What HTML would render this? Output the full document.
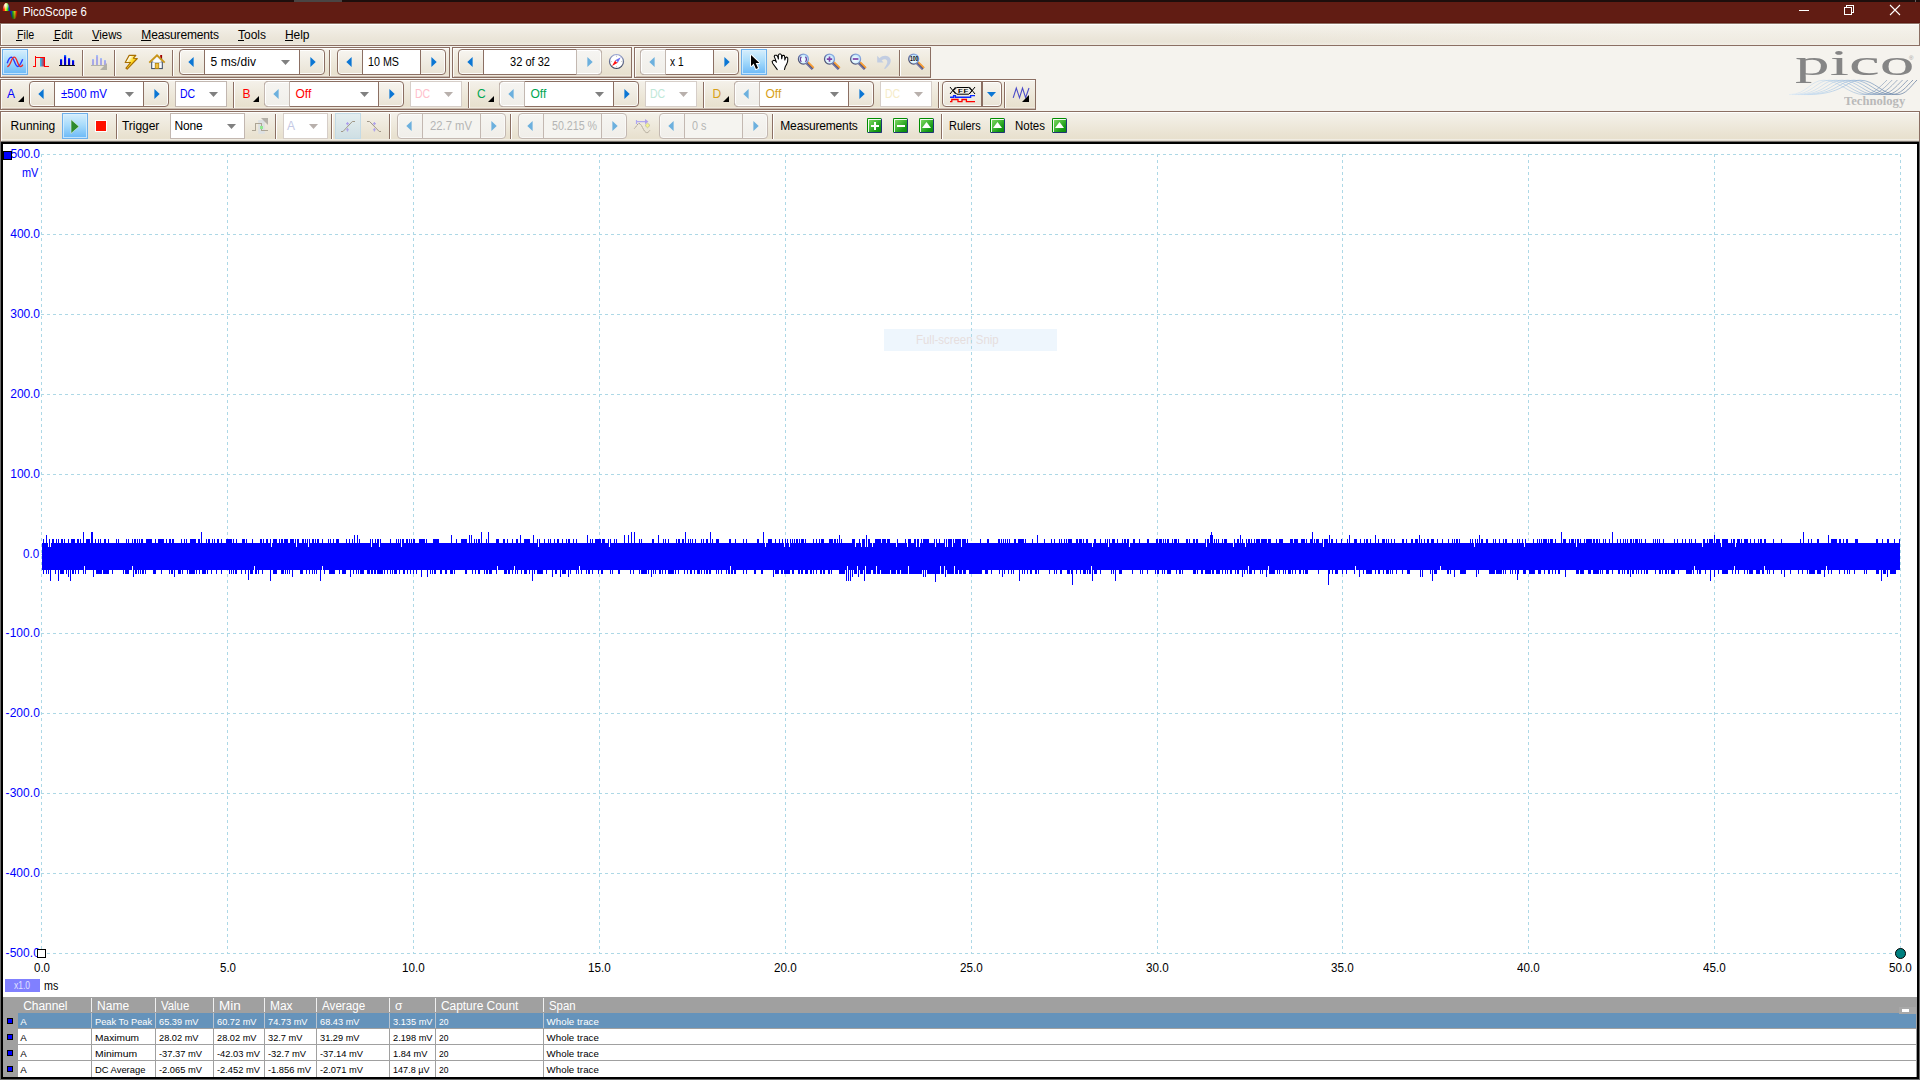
<!DOCTYPE html>
<html lang="en"><head><meta charset="utf-8"><title>PicoScope 6</title>
<style>
html,body{margin:0;padding:0}
body{width:1920px;height:1080px;position:relative;overflow:hidden;background:#f5f3ee;font-family:"Liberation Sans",sans-serif;font-size:12px}
div,span.t,svg{position:absolute;box-sizing:border-box}
span.t{display:block;line-height:16px;height:16px;white-space:pre}
svg{overflow:visible}
.strip{border:1px solid #8b6f63;background:linear-gradient(#fefefd 0,#fefefd 1px,#f4f1ea 1px,#eee9dc 45%,#e9e2d1 80%,#e8e0ce calc(100% - 2px),#efe8dc calc(100% - 2px),#efe8dc calc(100% - 1px),#c9bbae calc(100% - 1px));box-shadow:inset 1px 0 0 rgba(255,255,255,.8)}
.strip3{border-bottom:1px solid #77726c;background:linear-gradient(#fefefd 0,#fefefd 1px,#f4f1ea 1px,#eee9dc 45%,#e9e2d1 80%,#e8e0ce calc(100% - 2px),#f1ede3 calc(100% - 2px),#f1ede3 calc(100% - 1px),#ded7cc calc(100% - 1px))}
.grp{height:26px;border:1px solid #8b6f63;border-radius:4px;background:linear-gradient(#f7f5f0,#e9e3d5);box-shadow:inset 0 0 0 1px rgba(255,255,255,.85)}
.grp .in{top:0;bottom:0;background:#fff;border-left:1px solid #8b6f63;border-right:1px solid #8b6f63}
.grp.dis{border-color:#c3b8b1;background:linear-gradient(#f6f5f2,#f0eee9);box-shadow:inset 0 0 0 1px rgba(255,255,255,.55)}
.grp.dis .in{border-color:#c3b8b1;background:#f5f4f0}
.grp .dl{top:-1px;bottom:-1px;left:-1px;background:linear-gradient(#f6f5f2,#f0eee9);border:1px solid #c3b8b1;border-radius:4px 0 0 4px;box-shadow:inset 1px 0 0 #fff,inset 0 1px 0 #fff,inset 0 -1px 0 #fff}
.grp .dr{top:-1px;bottom:-1px;right:-1px;background:linear-gradient(#f6f5f2,#f0eee9);border:1px solid #c3b8b1;border-radius:0 4px 4px 0;box-shadow:inset -1px 0 0 #fff,inset 0 1px 0 #fff,inset 0 -1px 0 #fff}
.cb{background:#fff;border:1px solid #c2b7b0}
.cbd{border-color:#d6cec8}
.sep{width:2px;border-left:1px solid #8b6f63;background:#fff}
.sel{border:1px solid #6fb0ea;background:linear-gradient(#d6eefc,#a9dcfb 45%,#6cb9f7);box-shadow:inset 0 0 0 1px rgba(220,240,255,.75)}
.gb{width:15px;height:15px;border:1px solid;border-color:#008c00 #1f3674 #1f3674 #008c00;border-radius:1.5px;background:linear-gradient(135deg,#86dc68 0,#4cbc3c 40%,#169a16 75%,#0c8a0c 100%);box-shadow:inset 1px 1px 0 rgba(255,255,255,.92)}

</style></head>
<body>
<div style="left:0px;top:0px;width:1920px;height:2px;background:#1d0e0c"></div><div style="left:294px;top:0px;width:48px;height:2px;background:#4a4544"></div><div style="left:1915px;top:0px;width:1px;height:2px;background:#6a6262"></div><div style="left:0px;top:2px;width:1920px;height:21px;background:#611c13"></div><div style="left:0px;top:22px;width:1920px;height:1px;background:#5c150d"></div><svg style="left:0;top:0" width="22" height="22" viewBox="0 0 22 22">
<defs><linearGradient id="rb" x1="0" x2="1" y1="0" y2="0"><stop offset="0" stop-color="#d81010"/><stop offset=".2" stop-color="#ff2000"/><stop offset=".4" stop-color="#fff020"/><stop offset=".65" stop-color="#30e010"/><stop offset=".85" stop-color="#1020c0"/><stop offset="1" stop-color="#101890"/></linearGradient>
<linearGradient id="rb2" x1="0" x2="1" y1="0" y2="0"><stop offset="0" stop-color="#101890"/><stop offset=".15" stop-color="#1020c0"/><stop offset=".4" stop-color="#20c010"/><stop offset=".62" stop-color="#d8d010"/><stop offset=".85" stop-color="#e02000"/><stop offset="1" stop-color="#901008"/></linearGradient>
<radialGradient id="rbh" cx=".35" cy=".25" r=".6"><stop offset="0" stop-color="#fff" stop-opacity=".95"/><stop offset="1" stop-color="#fff" stop-opacity="0"/></radialGradient>
<linearGradient id="rbs" x1="0" x2="0" y1="0" y2="1"><stop offset="0" stop-color="#000" stop-opacity="0"/><stop offset="1" stop-color="#000" stop-opacity=".45"/></linearGradient></defs>
<path d="M2.7 11 C2.9 5.5 4.6 3 6.4 3 C8.2 3 9.6 6 10.2 11 Z" fill="url(#rb)"/>
<path d="M2.7 11 C2.9 5.5 4.6 3 6.4 3 C8.2 3 9.6 6 10.2 11 Z" fill="url(#rbh)"/>
<path d="M10 11 C10.6 16 12 19 13.9 19 C15.8 19 17.3 16 17.6 11 Z" fill="url(#rb2)"/>
<path d="M10 11 C10.6 16 12 19 13.9 19 C15.8 19 17.3 16 17.6 11 Z" fill="url(#rbs)"/>
</svg><span class="t" style="left:23.00px;top:4px;font-size:12px;color:#fff;transform-origin:0 50%;transform:scaleX(0.9453);">PicoScope 6</span><svg style="left:1790px;top:2px" width="120" height="20" viewBox="1790 2 120 20" shape-rendering="crispEdges" fill="none" stroke="#fff" stroke-width="1">
<path d="M1799 10.5 H1809"/>
<path d="M1844.5 7.5 H1851.5 V14.5 H1844.5 Z M1846.5 7 V5.5 H1853.5 V12.5 H1852"/>
<path d="M1890 5 L1900 15 M1900 5 L1890 15" shape-rendering="auto" stroke-width="1.1"/>
</svg><div style="left:0px;top:23px;width:1920px;height:23px;border:1px solid #8b6f63;border-top-color:#8f7468;background:linear-gradient(#fff 0,#fff 1px,#f4f1ea 1px,#ece7db 60%,#e9e3d6 85%,#eeeae0 100%);box-shadow:inset 1px 0 0 #fff"></div><div style="left:1200px;top:24px;width:719px;height:21px;background:linear-gradient(90deg,rgba(247,245,240,0),rgba(247,245,240,.45) 60%)"></div><span class="t" style="left:16.70px;top:27px;font-size:12px;color:#000;transform-origin:0 50%;transform:scaleX(0.8900);">File</span><span class="t" style="left:53.80px;top:27px;font-size:12px;color:#000;transform-origin:0 50%;transform:scaleX(0.8996);">Edit</span><span class="t" style="left:92.00px;top:27px;font-size:12px;color:#000;transform-origin:0 50%;transform:scaleX(0.9436);">Views</span><span class="t" style="left:141.30px;top:27px;font-size:12px;color:#000;letter-spacing:-0.151px;">Measurements</span><span class="t" style="left:238.00px;top:27px;font-size:12px;color:#000;">Tools</span><span class="t" style="left:285.00px;top:27px;font-size:12px;color:#000;letter-spacing:-0.069px;">Help</span><div style="left:16px;top:40px;width:6px;height:1px;background:#000"></div><div style="left:53px;top:40px;width:6px;height:1px;background:#000"></div><div style="left:92px;top:40px;width:7px;height:1px;background:#000"></div><div style="left:141px;top:40px;width:10px;height:1px;background:#000"></div><div style="left:238px;top:40px;width:6px;height:1px;background:#000"></div><div style="left:285px;top:40px;width:8px;height:1px;background:#000"></div><span class="t" style="left:1795.00px;top:42px;font-size:35px;color:#858585;font-family:'Liberation Serif', serif;line-height:44px;height:44px;transform-origin:0 0;transform:scaleX(1.98);">pico</span><span class="t" style="left:1844.00px;top:93px;font-size:11.5px;color:#b9b9b9;font-family:'Liberation Serif', serif;font-weight:bold;transform-origin:0 50%;transform:scaleX(1.0970);">Technology</span><span class="t" style="left:1909.00px;top:50px;font-size:6px;color:#a0a0a0;">®</span><svg style="left:0;top:0" width="1920" height="112" viewBox="0 0 1920 112" fill="none"><defs><linearGradient id="wv" gradientUnits="userSpaceOnUse" x1="1789" x2="1916" y1="0" y2="0"><stop offset="0" stop-color="#d6e6f6"/><stop offset=".3" stop-color="#b4d0ea"/><stop offset=".55" stop-color="#8fb0d4"/><stop offset=".7" stop-color="#6f8db2"/><stop offset="1" stop-color="#5a7396"/></linearGradient></defs><path d="M1789.0 94.6 C1807.0 94.6 1810.0 80.2 1824.0 80.2 C1839.0 80.2 1849.0 94.6 1864.0 94.6 C1873.0 94.6 1880.0 87 1887.0 80" stroke="url(#wv)" stroke-width=".75" opacity="0.70"/><path d="M1792.0 94.6 C1813.0 94.6 1816.0 80.2 1830.0 80.2 C1845.0 80.2 1854.5 94.6 1869.5 94.6 C1878.5 94.6 1885.2 87 1892.2 80" stroke="url(#wv)" stroke-width=".75" opacity="0.74"/><path d="M1795.0 94.6 C1819.0 94.6 1822.0 80.2 1836.0 80.2 C1851.0 80.2 1860.0 94.6 1875.0 94.6 C1884.0 94.6 1890.4 87 1897.4 80" stroke="url(#wv)" stroke-width=".75" opacity="0.78"/><path d="M1798.0 94.6 C1825.0 94.6 1828.0 80.2 1842.0 80.2 C1857.0 80.2 1865.5 94.6 1880.5 94.6 C1889.5 94.6 1895.6 87 1902.6 80" stroke="url(#wv)" stroke-width=".75" opacity="0.82"/><path d="M1801.0 94.6 C1831.0 94.6 1834.0 80.2 1848.0 80.2 C1863.0 80.2 1871.0 94.6 1886.0 94.6 C1895.0 94.6 1900.8 87 1907.8 80" stroke="url(#wv)" stroke-width=".75" opacity="0.86"/><path d="M1804.0 94.6 C1837.0 94.6 1840.0 80.2 1854.0 80.2 C1869.0 80.2 1876.5 94.6 1891.5 94.6 C1900.5 94.6 1906.0 87 1913.0 80" stroke="url(#wv)" stroke-width=".75" opacity="0.90"/><path d="M1807.0 94.6 C1843.0 94.6 1846.0 80.2 1860.0 80.2 C1875.0 80.2 1882.0 94.6 1897.0 94.6 C1906.0 94.6 1910.0 87 1917.0 80" stroke="url(#wv)" stroke-width=".75" opacity="0.94"/></svg><div class="strip" style="left:0px;top:47px;width:450px;height:31px;"></div><div class="strip" style="left:452px;top:47px;width:180px;height:31px;"></div><div class="strip" style="left:634px;top:47px;width:297px;height:31px;"></div><div class="sel" style="left:2px;top:49px;width:26px;height:26px;"></div><div class="sep" style="left:82px;top:50px;width:2px;height:26px;"></div><div class="sep" style="left:114px;top:50px;width:2px;height:26px;"></div><div class="sep" style="left:172px;top:50px;width:2px;height:26px;"></div><div class="grp" style="left:179px;top:49px;width:146px;height:26px;"><div class="in" style="left:24px;width:96px"></div></div><svg style="left:187.4px;top:55.5px" width="8" height="12" viewBox="0 0 8 12" ><path d="M1.3 6 L6.6 1 L6.6 11 Z" fill="#0b76d4"/></svg><svg style="left:308.6px;top:55.5px" width="8" height="12" viewBox="0 0 8 12" ><path d="M6.7 6 L1.4 1 L1.4 11 Z" fill="#0b76d4"/></svg><span class="t" style="left:210.40px;top:54px;font-size:12px;color:#000;letter-spacing:0.132px;">5 ms/div</span><svg style="left:281px;top:60px" width="9" height="5" viewBox="0 0 9 5" ><path d="M0 0 H9 L4.5 5 Z" fill="#808080"/></svg><div class="sep" style="left:329px;top:50px;width:2px;height:26px;"></div><div class="grp" style="left:337px;top:49px;width:109px;height:26px;"><div class="in" style="left:24px;width:59px"></div></div><svg style="left:345.4px;top:55.5px" width="8" height="12" viewBox="0 0 8 12" ><path d="M1.3 6 L6.6 1 L6.6 11 Z" fill="#0b76d4"/></svg><svg style="left:429.6px;top:55.5px" width="8" height="12" viewBox="0 0 8 12" ><path d="M6.7 6 L1.4 1 L1.4 11 Z" fill="#0b76d4"/></svg><span class="t" style="left:368.00px;top:54px;font-size:12px;color:#000;transform-origin:0 50%;transform:scaleX(0.8939);">10 MS</span><div class="grp" style="left:458px;top:49px;width:144px;height:26px;"><div class="in" style="left:24px;width:94px"></div><div class="dr" style="width:26px"></div></div><svg style="left:466.4px;top:55.5px" width="8" height="12" viewBox="0 0 8 12" ><path d="M1.3 6 L6.6 1 L6.6 11 Z" fill="#0b76d4"/></svg><svg style="left:585.6px;top:55.5px" width="8" height="12" viewBox="0 0 8 12" ><path d="M6.7 6 L1.4 1 L1.4 11 Z" fill="#6cb0de"/></svg><span class="t" style="left:510.30px;top:54px;font-size:12px;color:#000;transform-origin:0 50%;transform:scaleX(0.9223);">32 of 32</span><div class="grp" style="left:640px;top:49px;width:99px;height:26px;"><div class="in" style="left:24px;width:49px"></div><div class="dl" style="width:26px"></div></div><svg style="left:648.4px;top:55.5px" width="8" height="12" viewBox="0 0 8 12" ><path d="M1.3 6 L6.6 1 L6.6 11 Z" fill="#6cb0de"/></svg><svg style="left:722.6px;top:55.5px" width="8" height="12" viewBox="0 0 8 12" ><path d="M6.7 6 L1.4 1 L1.4 11 Z" fill="#0b76d4"/></svg><span class="t" style="left:670.00px;top:54px;font-size:12px;color:#000;transform-origin:0 50%;transform:scaleX(0.8449);">x 1</span><div class="sel" style="left:741px;top:49px;width:26px;height:26px;"></div><div class="sep" style="left:899px;top:50px;width:2px;height:26px;"></div><div class="strip" style="left:0px;top:79px;width:1036px;height:31px;"></div><span class="t" style="left:7.00px;top:86px;font-size:12px;color:#0000ff;">A</span><svg style="left:18px;top:96px" width="6" height="6" viewBox="0 0 6 6" ><path d="M6 0 V6 H0 Z" fill="#000"/></svg><div class="grp" style="left:29px;top:81px;width:140px;height:26px;"><div class="in" style="left:24px;width:90px"></div></div><svg style="left:37.4px;top:87.5px" width="8" height="12" viewBox="0 0 8 12" ><path d="M1.3 6 L6.6 1 L6.6 11 Z" fill="#0b76d4"/></svg><svg style="left:152.6px;top:87.5px" width="8" height="12" viewBox="0 0 8 12" ><path d="M6.7 6 L1.4 1 L1.4 11 Z" fill="#0b76d4"/></svg><span class="t" style="left:60.60px;top:86px;font-size:12px;color:#0000ff;transform-origin:0 50%;transform:scaleX(0.9596);">±500 mV</span><svg style="left:125px;top:92px" width="9" height="5" viewBox="0 0 9 5" ><path d="M0 0 H9 L4.5 5 Z" fill="#808080"/></svg><div class="cb" style="left:175px;top:81px;width:52px;height:26px;"></div><span class="t" style="left:179.80px;top:86px;font-size:12px;color:#0000ff;transform-origin:0 50%;transform:scaleX(0.8774);">DC</span><svg style="left:209px;top:92px" width="9" height="5" viewBox="0 0 9 5" ><path d="M0 0 H9 L4.5 5 Z" fill="#808080"/></svg><div class="sep" style="left:233px;top:82px;width:2px;height:26px;"></div><span class="t" style="left:242.50px;top:86px;font-size:12px;color:#ff0000;">B</span><svg style="left:253px;top:96px" width="6" height="6" viewBox="0 0 6 6" ><path d="M6 0 V6 H0 Z" fill="#000"/></svg><div class="grp" style="left:264px;top:81px;width:140px;height:26px;"><div class="in" style="left:24px;width:90px"></div><div class="dl" style="width:26px"></div></div><svg style="left:272.4px;top:87.5px" width="8" height="12" viewBox="0 0 8 12" ><path d="M1.3 6 L6.6 1 L6.6 11 Z" fill="#6cb0de"/></svg><svg style="left:387.6px;top:87.5px" width="8" height="12" viewBox="0 0 8 12" ><path d="M6.7 6 L1.4 1 L1.4 11 Z" fill="#0b76d4"/></svg><span class="t" style="left:295.60px;top:86px;font-size:12px;color:#ff0000;letter-spacing:-0.076px;">Off</span><svg style="left:360px;top:92px" width="9" height="5" viewBox="0 0 9 5" ><path d="M0 0 H9 L4.5 5 Z" fill="#808080"/></svg><div class="cb cbd" style="left:410px;top:81px;width:52px;height:26px;"></div><span class="t" style="left:414.80px;top:86px;font-size:12px;color:#ffc0cb;transform-origin:0 50%;transform:scaleX(0.8774);">DC</span><svg style="left:444px;top:92px" width="9" height="5" viewBox="0 0 9 5" ><path d="M0 0 H9 L4.5 5 Z" fill="#b8b0ac"/></svg><div class="sep" style="left:468px;top:82px;width:2px;height:26px;"></div><span class="t" style="left:477.00px;top:86px;font-size:12px;color:#00a651;">C</span><svg style="left:488px;top:96px" width="6" height="6" viewBox="0 0 6 6" ><path d="M6 0 V6 H0 Z" fill="#000"/></svg><div class="grp" style="left:499px;top:81px;width:140px;height:26px;"><div class="in" style="left:24px;width:90px"></div><div class="dl" style="width:26px"></div></div><svg style="left:507.4px;top:87.5px" width="8" height="12" viewBox="0 0 8 12" ><path d="M1.3 6 L6.6 1 L6.6 11 Z" fill="#6cb0de"/></svg><svg style="left:622.6px;top:87.5px" width="8" height="12" viewBox="0 0 8 12" ><path d="M6.7 6 L1.4 1 L1.4 11 Z" fill="#0b76d4"/></svg><span class="t" style="left:530.60px;top:86px;font-size:12px;color:#00a651;letter-spacing:-0.076px;">Off</span><svg style="left:595px;top:92px" width="9" height="5" viewBox="0 0 9 5" ><path d="M0 0 H9 L4.5 5 Z" fill="#808080"/></svg><div class="cb cbd" style="left:645px;top:81px;width:52px;height:26px;"></div><span class="t" style="left:649.80px;top:86px;font-size:12px;color:#c0e8d8;transform-origin:0 50%;transform:scaleX(0.8774);">DC</span><svg style="left:679px;top:92px" width="9" height="5" viewBox="0 0 9 5" ><path d="M0 0 H9 L4.5 5 Z" fill="#b8b0ac"/></svg><div class="sep" style="left:703px;top:82px;width:2px;height:26px;"></div><span class="t" style="left:712.50px;top:86px;font-size:12px;color:#d8a018;">D</span><svg style="left:723px;top:96px" width="6" height="6" viewBox="0 0 6 6" ><path d="M6 0 V6 H0 Z" fill="#000"/></svg><div class="grp" style="left:734px;top:81px;width:140px;height:26px;"><div class="in" style="left:24px;width:90px"></div><div class="dl" style="width:26px"></div></div><svg style="left:742.4px;top:87.5px" width="8" height="12" viewBox="0 0 8 12" ><path d="M1.3 6 L6.6 1 L6.6 11 Z" fill="#6cb0de"/></svg><svg style="left:857.6px;top:87.5px" width="8" height="12" viewBox="0 0 8 12" ><path d="M6.7 6 L1.4 1 L1.4 11 Z" fill="#0b76d4"/></svg><span class="t" style="left:765.60px;top:86px;font-size:12px;color:#d8a018;letter-spacing:-0.076px;">Off</span><svg style="left:830px;top:92px" width="9" height="5" viewBox="0 0 9 5" ><path d="M0 0 H9 L4.5 5 Z" fill="#808080"/></svg><div class="cb cbd" style="left:880px;top:81px;width:52px;height:26px;"></div><span class="t" style="left:884.80px;top:86px;font-size:12px;color:#f6ecc8;transform-origin:0 50%;transform:scaleX(0.8774);">DC</span><svg style="left:914px;top:92px" width="9" height="5" viewBox="0 0 9 5" ><path d="M0 0 H9 L4.5 5 Z" fill="#b8b0ac"/></svg><div class="sep" style="left:938px;top:82px;width:2px;height:26px;"></div><div class="grp" style="left:942px;top:81px;width:60px;height:26px;"><div style="left:38px;top:0;bottom:0;width:2px;background:#8b6f63"></div></div><svg style="left:987px;top:92px" width="9" height="5" viewBox="0 0 9 5" ><path d="M0 0 H9 L4.5 5 Z" fill="#0b76d4"/></svg><div class="sep" style="left:1004px;top:82px;width:2px;height:26px;"></div><div class="strip strip3" style="left:0px;top:111px;width:1920px;height:31px;"></div><span class="t" style="left:10.60px;top:118px;font-size:12px;color:#000;">Running</span><div class="sel" style="left:62px;top:113px;width:26px;height:26px;"></div><svg style="left:70px;top:119px" width="10" height="15" viewBox="0 0 10 15" ><path d="M1 0.5 L9 7.5 L1 14.5 Z" fill="#2e8b2e" stroke="#e8f4e8" stroke-width=".6"/></svg><div style="left:95px;top:120px;width:12px;height:12px;background:#fff"></div><div style="left:96px;top:121px;width:10px;height:10px;background:#ff1000"></div><div class="sep" style="left:116px;top:114px;width:2px;height:25px;"></div><span class="t" style="left:122.00px;top:118px;font-size:12px;color:#000;letter-spacing:-0.045px;">Trigger</span><div class="cb" style="left:170px;top:113px;width:75px;height:26px;"></div><span class="t" style="left:174.40px;top:118px;font-size:12px;color:#000;letter-spacing:-0.138px;">None</span><svg style="left:227px;top:124px" width="9" height="5" viewBox="0 0 9 5" ><path d="M0 0 H9 L4.5 5 Z" fill="#808080"/></svg><div class="sep" style="left:275px;top:114px;width:2px;height:25px;"></div><div class="cb cbd" style="left:283px;top:113px;width:45px;height:26px;"></div><span class="t" style="left:287.00px;top:118px;font-size:12px;color:#c4c8e4;">A</span><svg style="left:309px;top:124px" width="9" height="5" viewBox="0 0 9 5" ><path d="M0 0 H9 L4.5 5 Z" fill="#b8b0ac"/></svg><div class="sep" style="left:331px;top:114px;width:2px;height:25px;"></div><div style="left:335px;top:113px;width:26px;height:26px;border:1px solid #c4dbe6;background:linear-gradient(#e4eef0,#cfdfe4)"></div><div class="sep" style="left:389px;top:114px;width:2px;height:25px;"></div><div class="grp dis" style="left:397px;top:113px;width:109px;height:26px;"><div class="in" style="left:24px;width:59px"></div></div><svg style="left:405.4px;top:119.5px" width="8" height="12" viewBox="0 0 8 12" ><path d="M1.3 6 L6.6 1 L6.6 11 Z" fill="#6cb0de"/></svg><svg style="left:489.6px;top:119.5px" width="8" height="12" viewBox="0 0 8 12" ><path d="M6.7 6 L1.4 1 L1.4 11 Z" fill="#6cb0de"/></svg><span class="t" style="left:430.00px;top:118px;font-size:12px;color:#b4b4b4;transform-origin:0 50%;transform:scaleX(0.9399);">22.7 mV</span><div class="sep" style="left:510px;top:114px;width:2px;height:25px;"></div><div class="grp dis" style="left:518px;top:113px;width:109px;height:26px;"><div class="in" style="left:24px;width:59px"></div></div><svg style="left:526.4px;top:119.5px" width="8" height="12" viewBox="0 0 8 12" ><path d="M1.3 6 L6.6 1 L6.6 11 Z" fill="#6cb0de"/></svg><svg style="left:610.6px;top:119.5px" width="8" height="12" viewBox="0 0 8 12" ><path d="M6.7 6 L1.4 1 L1.4 11 Z" fill="#6cb0de"/></svg><span class="t" style="left:551.60px;top:118px;font-size:12px;color:#b4b4b4;transform-origin:0 50%;transform:scaleX(0.8895);">50.215 %</span><div class="grp dis" style="left:659px;top:113px;width:109px;height:26px;"><div class="in" style="left:24px;width:59px"></div></div><svg style="left:667.4px;top:119.5px" width="8" height="12" viewBox="0 0 8 12" ><path d="M1.3 6 L6.6 1 L6.6 11 Z" fill="#6cb0de"/></svg><svg style="left:751.6px;top:119.5px" width="8" height="12" viewBox="0 0 8 12" ><path d="M6.7 6 L1.4 1 L1.4 11 Z" fill="#6cb0de"/></svg><span class="t" style="left:692.30px;top:118px;font-size:12px;color:#b4b4b4;transform-origin:0 50%;transform:scaleX(0.8996);">0 s</span><div class="sep" style="left:772px;top:114px;width:2px;height:25px;"></div><span class="t" style="left:780.30px;top:118px;font-size:12px;color:#000;letter-spacing:-0.170px;">Measurements</span><div class="gb" style="left:867px;top:118px;width:15px;height:15px;"><svg style="left:-1px;top:-1px" width="15" height="15" viewBox="0 0 15 15"><path d="M4 8 H12 M8 4 V12" stroke="#fff" stroke-width="2"/></svg></div><div class="gb" style="left:893px;top:118px;width:15px;height:15px;"><svg style="left:-1px;top:-1px" width="15" height="15" viewBox="0 0 15 15"><path d="M4 8 H12" stroke="#fff" stroke-width="2"/></svg></div><div class="gb" style="left:919px;top:118px;width:15px;height:15px;"><svg style="left:-1px;top:-1px" width="15" height="15" viewBox="0 0 15 15"><path d="M3 9.9 H12 L7.5 4 Z" fill="#fff"/></svg></div><div class="sep" style="left:941px;top:114px;width:2px;height:25px;"></div><span class="t" style="left:949.40px;top:118px;font-size:12px;color:#000;transform-origin:0 50%;transform:scaleX(0.9113);">Rulers</span><div class="gb" style="left:990px;top:118px;width:15px;height:15px;"><svg style="left:-1px;top:-1px" width="15" height="15" viewBox="0 0 15 15"><path d="M3 9.9 H12 L7.5 4 Z" fill="#fff"/></svg></div><span class="t" style="left:1014.80px;top:118px;font-size:12px;color:#000;transform-origin:0 50%;transform:scaleX(0.9570);">Notes</span><div class="gb" style="left:1052px;top:118px;width:15px;height:15px;"><svg style="left:-1px;top:-1px" width="15" height="15" viewBox="0 0 15 15"><path d="M3 9.9 H12 L7.5 4 Z" fill="#fff"/></svg></div><svg style="left:0;top:0" width="1920" height="145" viewBox="0 0 1920 145"><defs>
<linearGradient id="sq" x1="0" x2="1"><stop offset="0" stop-color="#28c8ff"/><stop offset="1" stop-color="#d81830"/></linearGradient>
<linearGradient id="bar" x1="0" y1="0" x2="0" y2="1"><stop offset="0" stop-color="#2090ff"/><stop offset=".25" stop-color="#0000f0"/><stop offset="1" stop-color="#0000c0"/></linearGradient>
<linearGradient id="bard" x1="0" y1="0" x2="0" y2="1"><stop offset="0" stop-color="#a8c8f8"/><stop offset=".25" stop-color="#a8a8ec"/><stop offset="1" stop-color="#a8a8e4"/></linearGradient>
<radialGradient id="lens" cx=".45" cy=".55" r=".6"><stop offset="0" stop-color="#ffffff"/><stop offset=".55" stop-color="#d8f2fd"/><stop offset="1" stop-color="#a8dcfa"/></radialGradient>
<linearGradient id="ring" x1="1" y1="0" x2="0" y2="1"><stop offset="0" stop-color="#98c0f4"/><stop offset=".5" stop-color="#7080b8"/><stop offset="1" stop-color="#3c3850"/></linearGradient>
<linearGradient id="bolt" x1="0" y1="0" x2="1" y2=".8"><stop offset="0" stop-color="#ffffff"/><stop offset=".3" stop-color="#fffbe8"/><stop offset=".5" stop-color="#ffe038"/><stop offset=".72" stop-color="#ffc400"/><stop offset="1" stop-color="#b87800"/></linearGradient>
<linearGradient id="cring" x1="0" y1="0" x2="0" y2="1"><stop offset="0" stop-color="#98a4d0"/><stop offset="1" stop-color="#363e58"/></linearGradient>
<g id="mag"><path d="M3.6 3.8 L9.6 9.6" stroke="#5a5878" stroke-width="3.2" stroke-linecap="butt"/><path d="M4.6 3 L10.4 8.8" stroke="#ffa030" stroke-width="1.5"/><path d="M3.0 4.8 L8.6 10.4" stroke="#7878a8" stroke-width="1.1"/><circle cx="0" cy="0" r="5" fill="url(#lens)" stroke="url(#ring)" stroke-width="1.25"/></g>
<g id="pc"><path d="M-1.5 0 H1.5 M0 -1.7 V1.7" stroke="#b0a4ea" stroke-width="1.1"/></g>
</defs><path d="M7.2 63.3 C8.6 58.6 9.8 57.2 11.3 57.2 C14.2 57.2 14.8 66.5 17.7 66.5 C19.6 66.5 21 63.2 22.7 59.2" fill="none" stroke="#2838ff" stroke-width="1.35"/><path d="M7.2 66.5 C10.6 66.5 11.2 57.2 14.2 57.2 C17.2 57.2 17.6 66.5 20.5 66.5 C21.5 66.5 22.2 65.8 22.8 64.6" fill="none" stroke="#f02828" stroke-width="1.35"/><rect x="40" y="58" width="4.5" height="8.5" fill="url(#sq)"/><path d="M33 66.5 H35.5 V56 M35.5 57.5 H44.5 V66.5 H49" fill="none" stroke="#ff0000" stroke-width="1.1" shape-rendering="crispEdges"/><rect x="62" y="59" width="1" height="6" fill="#fffbe0" opacity=".8"/><rect x="60" y="59" width="2.2" height="6" fill="url(#bar)"/><rect x="66" y="55" width="1" height="10" fill="#fffbe0" opacity=".8"/><rect x="64" y="55" width="2.2" height="10" fill="url(#bar)"/><rect x="70" y="58" width="1" height="7" fill="#fffbe0" opacity=".8"/><rect x="68" y="58" width="2.2" height="7" fill="url(#bar)"/><rect x="74" y="60" width="1" height="5" fill="#fffbe0" opacity=".8"/><rect x="72" y="60" width="2.2" height="5" fill="url(#bar)"/><rect x="59" y="65" width="16" height="1" fill="#101010"/><rect x="94" y="59" width="1" height="6" fill="#fffbe0" opacity=".8"/><rect x="92" y="59" width="2.2" height="6" fill="url(#bard)"/><rect x="98" y="55" width="1" height="10" fill="#fffbe0" opacity=".8"/><rect x="96" y="55" width="2.2" height="10" fill="url(#bard)"/><rect x="102" y="58" width="1" height="7" fill="#fffbe0" opacity=".8"/><rect x="100" y="58" width="2.2" height="7" fill="url(#bard)"/><rect x="106" y="60" width="1" height="5" fill="#fffbe0" opacity=".8"/><rect x="104" y="60" width="2.2" height="5" fill="url(#bard)"/><rect x="91" y="65" width="16" height="1" fill="#b4b2a8"/><path d="M107 63 V70 H100 Z" fill="#b2b0a6"/><path d="M129.2 55.4 H135.8 L133.4 58.2 L137.3 58.5 L127.2 69.1 L126 68.2 L130.6 62.5 L125.2 62.5 Z" fill="url(#bolt)" stroke="#a86e00" stroke-width="1.15" stroke-linejoin="round"/><rect x="151.7" y="62" width="10.6" height="6.6" fill="#f8fbff" stroke="#384860" stroke-width="1"/><path d="M152.2 62.4 L157 57 L161.8 62.4 Z" fill="#f8fbff"/><rect x="160.2" y="55" width="1.9" height="3.4" fill="#a00000"/><rect x="160.6" y="58.2" width="1.5" height="1.6" fill="#101010"/><path d="M149.3 62.6 L157 55.4 L164.7 62.6" fill="none" stroke="#c89418" stroke-width="1.9" stroke-linejoin="miter"/><rect x="155.3" y="63.4" width="3.4" height="5" fill="#f0c040" stroke="#b88810" stroke-width=".9"/><circle cx="616.5" cy="61.5" r="7" fill="#fff" stroke="url(#cring)" stroke-width="1.2"/><path d="M616.5 55.5 V57 M616.5 66 V67.5 M610.5 61.5 H612 M621 61.5 H622.5" stroke="#c8c8c8" stroke-width=".9"/><path d="M612 65.9 L615.2 60.2 L617.8 62.8 Z" fill="#ff1010"/><path d="M620.8 57.2 L615.2 60.2 L617.8 62.8 Z" fill="#7070f0"/><circle cx="616.5" cy="61.5" r=".8" fill="#e8f4ff"/><path d="M751 55 V66.2 L753.7 63.6 L756 68.9 L758 68 L755.7 62.9 L759.4 62.9 Z" fill="#000" stroke="#fff" stroke-width="2" stroke-linejoin="miter" stroke-miterlimit="2" paint-order="stroke"/><path d="M777.5 69.9 L772.6 63.2 L772.1 61.4 L773.6 60.3 L775.4 60.7 L776.4 62.2 L775.4 59.4 L774.2 56.4 L774.8 55.3 L776.4 55.2 L777.6 56.4 L778.4 59 L778.3 55 L779.2 54 L780.6 54 L781.5 55 L781.7 58.8 L782.3 55.8 L783.2 55.2 L784.3 55.6 L784.7 57 L784.8 60 L785.6 57.6 L786.6 57 L787.6 57.6 L787.8 59 L787.6 61.6 L786.5 64.6 L785.2 66.8 L784.4 69.9 Z" fill="#fff"/><path d="M777.5 69.9 L772.6 63.2 L772.1 61.4 L773.6 60.3 L775.4 60.7 L776.4 62.2 L775.4 59.4 L774.2 56.4 L774.8 55.3 L776.4 55.2 L777.6 56.4 L778.4 59 L778.3 55 L779.2 54 L780.6 54 L781.5 55 L781.7 58.8 L782.3 55.8 L783.2 55.2 L784.3 55.6 L784.7 57 L784.8 60 L785.6 57.6 L786.6 57 L787.6 57.6 L787.8 59 L787.6 61.6 L786.5 64.6 L785.2 66.8 L784.4 69.9" fill="none" stroke="#000" stroke-width="1.05" stroke-linejoin="round" stroke-linecap="butt"/><use href="#mag" x="803.4" y="59.1"/><use href="#mag" x="829.5" y="59.1"/><use href="#mag" x="855.6" y="59.1"/><use href="#mag" x="913.7" y="59.1"/><path d="M801.4 56.7 C800 58 800 60.4 801.4 61.7 M805.4 56.7 C806.8 58 806.8 60.4 805.4 61.7" fill="none" stroke="#6c3c9c" stroke-width="1.2"/><path d="M826.8 59.1 H832.2 M829.5 56.4 V61.8" stroke="#7c40a8" stroke-width="1.7"/><path d="M852.8 59 H858.4" stroke="#7c40a8" stroke-width="1.7"/><path d="M877.2 55.8 L877.2 62.6 L883.6 62.6 L881.6 60.4 C883.6 58.6 886.6 58.8 887.2 61 C887.8 63.2 886 66 884 68.4 L885.2 69 C888.8 66.2 891.4 63 890.6 59.6 C889.6 55.4 883.4 54.4 879.6 58.2 Z" fill="#c2cde2"/></svg><span class="t" style="left:909.60px;top:51.4px;font-size:7px;color:#000;font-weight:bold;transform-origin:0 50%;transform:scaleX(0.7127);">100</span><span class="t" style="left:957.60px;top:83.1px;font-size:5.7px;color:#000;font-weight:bold;transform-origin:0 100%;transform:scaleX(1.36);letter-spacing:.55px;">FF</span><svg style="left:0;top:0" width="1920" height="145" viewBox="0 0 1920 145"><g fill="none" stroke="#000" stroke-width="1"><path d="M950 87 L955.6 94 M950 94 L955.6 87 M969.4 87 L975 94 M969.4 94 L975 87"/><path d="M953.4 90.7 L956.8 87.5 H968.8 L972 90.7 L968.8 94.2 H956.8 Z" stroke-width="1"/></g><path d="M950 97.2 H953.6 V95.6 H955.4 V97.2 H970.6 V95.6 H975" fill="none" stroke="#0828ff" stroke-width="1.35"/><path d="M950 101.6 H951.8 V99.5 H958 V101.6 H962 V99.5 H966.4 V101.6 H975" fill="none" stroke="#ff0000" stroke-width="1.3"/><path d="M1013.2 97.8 L1016.3 88 L1019.5 97.8 L1022.5 88 L1025.6 97.6 L1029 88" fill="none" stroke="#4a4ac8" stroke-width="1.1"/><path d="M1022 102 H1029 V95 Z" fill="#000"/><rect x="258.2" y="120" width="6.6" height="13.8" fill="#dde0e2"/><path d="M261 118 H268 V125 Z" fill="#b4b0a8"/><path d="M252 130.5 H255.5 V123.5 H261.5 V130.5 H268" fill="none" stroke="#aca494" stroke-width="1" shape-rendering="crispEdges"/><rect x="260" y="126" width="3" height="3" fill="#90e890"/><path d="M341 131.5 H343 L352.3 121.5 H355" fill="none" stroke="#a09888" stroke-width="1"/><use href="#pc" x="347.5" y="123.6"/><use href="#pc" x="347.5" y="129.8"/><path d="M367 121.5 H369.6 L379.2 131.5 H381" fill="none" stroke="#a09888" stroke-width="1"/><use href="#pc" x="374.4" y="123.6"/><use href="#pc" x="374.4" y="129.8"/><path d="M636.5 120 V124 M636.5 121.6 H645.5" stroke="#b0a8f0" stroke-width="1.2" fill="none"/><path d="M645 119 L648.4 121.6 L645 124.2 Z" fill="#b0a0ee"/><path d="M634.3 128.6 C636.5 126.6 637.5 123.5 639 123.5 C642 123.5 643.5 132.7 647 132.7 C648 132.7 649 131.5 649.8 130.4" fill="none" stroke="#a8a090" stroke-width="1" stroke-dasharray="1.6 .6"/><path d="M647.5 123 L650 125.4 L647.5 127.8 L645 125.4 Z" fill="#f2f28c" stroke="#b8b4a0" stroke-width=".7"/></svg><div style="left:0px;top:142px;width:1920px;height:938px;background:#6b6b6b"></div><div style="left:1px;top:142px;width:1918px;height:937px;background:#000"></div><div style="left:3px;top:144px;width:1914px;height:933px;background:#fff"></div><div style="left:884px;top:329px;width:173px;height:22px;background:#eef6fd"></div><span class="t" style="left:916.40px;top:332px;font-size:12px;color:#e6dede;transform-origin:0 50%;transform:scaleX(0.9537);">Full-screen Snip</span><svg style="left:0;top:0" width="1920" height="1080" viewBox="0 0 1920 1080"><g stroke="#add8e6" stroke-width="1" stroke-dasharray="3 3" shape-rendering="crispEdges"><path d="M41 154.5 H1901"/><path d="M41 234.5 H1901"/><path d="M41 314.5 H1901"/><path d="M41 394.5 H1901"/><path d="M41 474.5 H1901"/><path d="M41 554.5 H1901"/><path d="M41 633.5 H1901"/><path d="M41 713.5 H1901"/><path d="M41 793.5 H1901"/><path d="M41 873.5 H1901"/><path d="M41 953.5 H1901"/><path d="M41.5 154 V954"/><path d="M227.5 154 V954"/><path d="M413.5 154 V954"/><path d="M599.5 154 V954"/><path d="M785.5 154 V954"/><path d="M971.5 154 V954"/><path d="M1157.5 154 V954"/><path d="M1342.5 154 V954"/><path d="M1528.5 154 V954"/><path d="M1714.5 154 V954"/><path d="M1900.5 154 V954"/></g><path d="M42 556V543H43V539H44V543H46V535H47V543H48V547H49V539H50V547H51V543H52V539H54V543H56V539H57V543H58V539H59V543H61V539H63V543H64V539H65V543H68V539H69V543H71V539H75V543H77V539H79V543H80V539H81V543H83V532H84V543H86V539H90V543H91V532H93V543H95V539H96V543H98V539H99V543H100V539H101V543H104V539H106V543H108V539H109V543H116V539H117V543H118V539H119V543H126V539H127V543H128V539H129V543H132V539H133V543H134V539H136V543H137V539H138V543H139V539H140V543H141V539H143V543H146V539H152V543H155V539H156V543H158V539H164V543H166V539H167V543H169V539H171V543H172V539H174V543H181V539H182V543H184V539H185V543H186V539H187V543H190V539H196V543H198V539H200V543H201V532H202V543H206V539H207V543H208V539H210V543H212V539H213V543H214V539H215V543H217V539H219V543H221V539H222V543H226V539H232V543H233V539H234V543H236V539H237V543H242V539H245V543H246V539H247V543H252V539H253V543H260V539H262V543H263V539H264V543H266V539H268V543H270V539H271V547H272V543H273V539H277V543H279V539H280V543H281V539H283V543H284V539H288V543H290V539H294V543H295V539H296V547H297V539H299V543H302V539H304V543H305V539H306V543H307V539H308V547H309V539H310V543H312V539H314V543H315V539H316V543H317V539H319V543H322V539H323V543H328V539H329V543H330V539H331V543H333V539H334V543H336V539H339V543H346V539H347V543H349V539H350V543H352V539H353V543H354V535H355V543H357V535H358V543H359V539H360V543H370V539H371V547H372V539H373V543H375V539H376V543H377V539H379V547H380V539H381V543H390V539H391V543H396V539H397V543H398V539H399V543H400V539H401V547H402V539H404V543H406V539H408V543H409V539H410V543H411V539H412V543H413V539H415V543H419V539H425V543H426V539H427V543H433V539H439V543H451V535H452V543H456V539H457V543H461V539H467V543H469V535H470V543H471V535H472V543H474V539H475V543H476V539H477V543H478V539H480V543H481V532H482V543H486V539H487V543H488V532H489V543H496V539H499V543H503V539H505V543H507V539H508V543H512V539H513V543H516V539H518V543H520V535H521V543H524V539H530V543H533V535H534V543H537V539H538V547H539V539H540V543H544V539H545V543H548V539H549V543H550V539H551V543H554V539H555V543H557V539H559V543H562V539H563V543H566V539H567V543H568V539H570V543H573V539H574V543H576V539H577V543H587V535H588V543H590V539H591V543H592V539H593V543H595V539H601V543H602V539H605V543H608V539H609V547H610V539H611V543H614V539H615V543H616V539H617V543H624V535H625V543H628V535H629V543H631V532H632V543H634V532H635V543H639V539H640V543H641V539H642V543H652V539H654V543H658V535H659V543H663V539H664V543H665V539H666V543H668V539H669V543H676V539H677V543H678V539H680V543H682V539H684V543H685V532H686V543H688V539H689V543H690V539H691V543H692V539H693V543H695V539H696V543H701V539H702V543H703V539H704V543H706V539H708V543H710V532H711V543H712V539H713V543H716V539H719V543H729V539H731V543H735V539H736V543H743V539H744V543H746V539H747V543H757V539H759V543H763V532H764V543H765V547H766V543H768V539H772V543H775V539H776V543H779V539H780V543H782V539H783V543H784V547H785V539H786V543H787V539H788V543H789V547H790V539H791V543H792V539H793V543H794V539H795V543H796V539H798V543H799V539H800V543H801V539H804V543H805V539H806V543H813V539H814V543H816V539H817V543H819V539H820V543H821V539H824V543H829V539H833V543H834V539H836V543H837V539H838V543H839V535H840V543H841V539H842V543H852V539H855V547H856V543H859V539H860V543H861V547H862V539H865V547H866V535H867V547H868V539H870V543H872V547H873V543H875V539H881V543H882V539H886V543H887V539H890V543H896V547H897V539H898V543H905V539H906V543H907V547H908V539H911V543H914V539H916V547H917V539H919V547H920V543H921V539H922V543H923V539H929V543H934V539H935V547H936V539H937V543H939V539H940V543H944V539H945V547H946V539H947V547H948V539H952V547H953V539H954V543H955V539H961V547H962V539H966V543H967V539H968V543H980V539H981V543H987V539H989V543H998V539H1000V543H1001V539H1002V543H1003V539H1004V543H1005V539H1006V543H1007V539H1008V543H1009V539H1010V543H1014V539H1016V543H1018V539H1024V543H1025V539H1026V543H1032V539H1033V543H1037V535H1038V543H1044V539H1045V543H1051V539H1052V543H1054V539H1055V543H1059V539H1060V543H1061V539H1062V543H1064V539H1065V543H1066V539H1067V543H1068V539H1072V543H1076V539H1078V543H1079V539H1082V543H1083V539H1084V543H1086V539H1088V543H1092V547H1093V543H1094V539H1096V543H1100V539H1101V543H1105V539H1106V543H1107V539H1108V547H1109V539H1110V543H1112V539H1115V543H1117V539H1118V543H1122V539H1123V543H1124V539H1126V543H1127V539H1129V547H1130V543H1133V539H1135V543H1139V539H1140V543H1147V539H1149V543H1156V539H1158V543H1159V539H1162V543H1163V539H1164V543H1165V539H1166V543H1167V539H1169V543H1172V539H1173V543H1174V539H1177V543H1178V539H1179V543H1186V539H1188V543H1189V539H1190V543H1193V539H1195V543H1196V539H1198V543H1205V539H1206V547H1207V539H1209V543H1210V535H1211V532H1212V535H1213V543H1214V539H1215V543H1216V539H1217V543H1218V539H1219V543H1222V539H1223V543H1224V539H1227V543H1233V547H1234V539H1235V543H1237V539H1239V543H1240V535H1241V543H1242V539H1243V543H1245V547H1246V539H1247V543H1248V539H1250V543H1251V539H1252V543H1254V539H1255V543H1256V539H1260V543H1261V539H1267V543H1268V539H1271V543H1276V539H1277V543H1279V539H1283V543H1290V539H1293V543H1294V539H1298V543H1301V539H1305V543H1306V539H1307V543H1310V539H1312V532H1313V543H1314V539H1315V543H1316V539H1319V543H1322V539H1323V547H1324V539H1328V543H1329V535H1330V543H1331V539H1333V543H1336V539H1337V543H1341V539H1342V543H1347V539H1348V543H1349V535H1350V543H1354V539H1357V543H1360V539H1361V543H1364V539H1365V543H1366V539H1368V543H1370V539H1371V543H1375V535H1376V543H1378V539H1379V543H1382V539H1385V543H1386V539H1387V543H1388V539H1389V543H1391V539H1392V543H1394V539H1395V543H1402V539H1404V543H1406V539H1407V543H1411V539H1413V543H1415V539H1418V543H1419V535H1420V543H1421V539H1422V543H1424V539H1425V543H1427V539H1429V543H1431V539H1434V543H1437V539H1438V543H1442V539H1443V543H1448V539H1449V543H1452V539H1453V543H1454V539H1455V543H1456V539H1458V543H1459V539H1460V543H1470V539H1471V543H1472V539H1473V543H1474V547H1475V539H1476V543H1477V539H1478V543H1479V535H1480V543H1481V539H1483V543H1486V539H1488V543H1493V539H1494V543H1495V539H1496V543H1499V539H1500V543H1503V539H1504V543H1505V539H1507V543H1512V539H1513V543H1517V539H1518V543H1519V539H1520V543H1522V539H1523V543H1524V547H1525V539H1526V543H1533V539H1534V543H1537V539H1538V543H1539V539H1540V543H1541V539H1542V543H1543V539H1547V543H1548V539H1549V543H1550V539H1553V543H1555V539H1556V543H1561V532H1562V543H1563V539H1566V543H1569V539H1570V543H1571V539H1574V543H1575V539H1576V547H1577V539H1579V543H1580V539H1581V543H1584V539H1585V543H1586V539H1592V543H1593V539H1595V543H1596V539H1598V543H1599V539H1600V543H1603V539H1604V543H1605V539H1606V543H1609V539H1610V543H1612V532H1613V543H1617V539H1618V543H1620V539H1621V543H1623V539H1624V543H1625V539H1626V543H1627V539H1628V543H1630V539H1632V543H1633V539H1634V543H1635V539H1638V543H1639V539H1640V543H1641V539H1642V543H1645V539H1646V543H1653V539H1654V543H1655V539H1656V543H1657V539H1658V543H1659V539H1660V543H1663V539H1664V543H1674V539H1675V543H1677V539H1678V543H1682V539H1683V543H1685V539H1686V543H1689V539H1690V543H1691V539H1692V543H1695V539H1696V543H1702V547H1703V539H1705V543H1707V539H1708V543H1709V539H1713V543H1714V535H1715V543H1716V539H1720V543H1721V547H1722V539H1728V543H1731V539H1732V543H1733V539H1735V547H1736V543H1737V539H1740V543H1741V539H1742V543H1744V539H1748V543H1750V539H1751V543H1754V539H1755V543H1758V539H1759V543H1760V539H1762V543H1764V539H1766V543H1773V539H1774V543H1781V539H1782V543H1800V539H1801V543H1803V532H1804V543H1808V539H1809V543H1811V539H1812V543H1817V539H1819V543H1828V535H1829V543H1831V539H1837V543H1839V539H1841V543H1843V539H1844V543H1846V539H1848V543H1855V539H1858V543H1876V539H1878V543H1882V539H1883V543H1887V539H1889V543H1894V539H1895V543H1899V539H1900V570H1896V574H1890V570H1888V577H1887V570H1886V574H1883V570H1882V581H1881V570H1879V574H1876V570H1867V574H1866V570H1865V574H1864V570H1855V574H1854V570H1850V574H1849V570H1848V574H1847V570H1845V574H1844V570H1840V574H1839V570H1832V574H1831V570H1829V574H1828V570H1827V566H1826V570H1825V577H1824V570H1821V574H1817V570H1815V574H1809V570H1808V574H1807V570H1803V574H1802V570H1799V574H1798V570H1791V574H1790V570H1785V577H1784V570H1782V574H1781V570H1774V574H1773V570H1770V574H1769V570H1768V574H1767V570H1765V566H1764V574H1762V570H1760V574H1756V570H1753V574H1749V570H1748V574H1747V570H1745V574H1744V570H1739V574H1738V570H1736V574H1735V566H1734V570H1733V574H1732V570H1728V574H1722V570H1719V574H1718V570H1715V577H1714V570H1711V581H1710V570H1706V574H1705V570H1701V574H1699V570H1698V574H1697V570H1695V566H1694V574H1693V570H1692V574H1686V570H1679V574H1678V570H1675V574H1671V570H1669V574H1668V570H1667V574H1665V570H1663V574H1662V570H1661V574H1659V570H1656V574H1655V570H1648V574H1646V570H1645V574H1644V570H1642V574H1641V570H1639V574H1638V570H1637V574H1636V570H1634V574H1632V570H1631V577H1630V570H1629V574H1627V570H1625V574H1624V570H1623V574H1622V570H1620V574H1618V570H1613V574H1612V570H1609V574H1606V570H1603V574H1602V570H1601V574H1600V570H1599V574H1593V570H1591V574H1588V570H1584V574H1580V570H1579V574H1576V570H1566V577H1565V570H1560V574H1558V570H1556V574H1555V570H1553V574H1552V570H1550V574H1548V570H1545V574H1544V570H1541V574H1538V570H1535V574H1529V570H1526V574H1523V570H1519V574H1518V580H1517V570H1516V574H1515V570H1513V574H1512V570H1511V574H1510V570H1506V574H1505V570H1504V574H1503V570H1502V574H1496V570H1495V574H1489V570H1479V574H1478V570H1477V577H1476V570H1466V574H1460V570H1455V577H1454V570H1451V574H1450V570H1449V574H1447V570H1441V566H1440V570H1437V574H1434V570H1433V581H1432V570H1431V574H1430V570H1423V577H1422V570H1421V577H1420V570H1410V574H1407V570H1403V574H1402V570H1397V574H1396V570H1393V574H1392V570H1391V574H1390V570H1389V574H1386V570H1384V574H1383V570H1380V574H1378V570H1376V574H1375V570H1372V574H1366V570H1364V574H1363V570H1360V577H1359V570H1356V566H1355V574H1354V570H1347V574H1346V570H1343V574H1342V570H1338V574H1335V570H1333V574H1332V570H1330V574H1329V585H1328V570H1319V574H1318V570H1308V574H1305V570H1304V574H1303V570H1301V574H1299V570H1296V574H1295V570H1293V574H1292V570H1291V574H1288V570H1286V574H1285V570H1284V574H1283V570H1280V574H1279V570H1278V574H1277V570H1275V574H1269V566H1268V570H1267V577H1266V570H1263V574H1262V570H1261V574H1260V570H1255V574H1254V570H1252V574H1249V566H1248V574H1247V570H1245V574H1244V570H1243V577H1242V570H1239V574H1237V570H1236V574H1235V570H1232V574H1230V570H1228V574H1227V570H1226V574H1225V570H1223V574H1222V570H1220V574H1216V570H1214V574H1212V570H1211V574H1205V570H1203V574H1201V570H1198V574H1197V570H1196V574H1193V570H1183V574H1182V570H1181V574H1179V570H1177V574H1176V570H1171V574H1167V570H1165V574H1164V570H1163V574H1162V570H1159V574H1157V570H1156V574H1155V570H1148V574H1147V570H1143V574H1142V570H1141V574H1140V570H1133V574H1132V570H1122V574H1119V570H1116V581H1115V570H1114V574H1113V570H1112V574H1111V570H1101V574H1100V570H1097V574H1094V570H1093V581H1092V566H1091V574H1089V570H1088V574H1087V570H1086V574H1083V570H1081V574H1080V570H1077V574H1076V570H1073V585H1072V574H1071V570H1070V574H1067V570H1062V574H1060V570H1057V574H1056V570H1055V574H1054V570H1050V574H1049V570H1039V574H1038V570H1037V574H1035V570H1032V574H1030V570H1028V574H1027V570H1025V574H1024V570H1023V574H1022V570H1020V581H1019V570H1014V574H1013V570H1012V574H1011V570H1009V574H1008V570H1005V574H1004V570H1003V577H1002V570H1000V574H999V570H992V574H991V570H988V574H985V570H982V574H969V570H966V574H963V570H962V574H959V570H958V574H955V566H954V574H947V570H946V577H945V566H944V574H941V566H940V574H936V582H935V574H927V570H926V577H925V570H924V577H923V570H922V574H909V566H908V574H901V570H900V574H897V570H896V574H891V570H890V574H881V570H880V574H877V566H876V574H873V570H871V574H866V566H865V581H864V570H863V574H860V570H859V577H858V566H857V574H854V570H853V577H852V570H851V581H850V570H849V581H848V566H847V581H846V570H845V574H839V570H832V574H831V570H830V574H828V570H825V574H823V570H822V574H820V570H817V574H816V570H814V574H813V570H812V574H810V570H808V574H805V570H803V574H801V570H800V574H798V570H794V574H792V570H790V574H784V570H783V574H781V570H779V574H775V570H774V577H773V570H763V574H761V570H756V574H754V570H747V574H746V570H744V574H743V570H736V574H734V570H733V574H731V566H730V574H728V570H727V574H726V570H722V574H721V570H719V574H718V570H717V574H716V570H711V574H709V570H708V574H706V570H705V574H704V570H702V574H701V570H700V574H697V570H695V574H694V570H692V574H690V570H688V574H687V570H685V574H684V570H679V574H678V570H676V574H675V570H674V574H668V570H666V574H665V570H663V574H662V570H661V574H659V570H656V574H655V570H654V574H653V570H652V577H651V570H649V574H648V570H647V574H641V570H640V574H639V570H634V574H633V570H631V574H630V570H620V574H618V570H613V574H612V570H611V574H610V570H603V574H601V570H599V574H598V570H593V574H592V570H590V574H588V570H587V574H586V570H582V574H581V570H580V566H579V574H578V570H577V574H576V570H571V574H570V570H569V577H568V570H566V574H562V570H561V577H560V570H557V574H555V570H553V577H552V570H547V574H546V570H543V574H537V570H535V574H534V570H533V581H532V570H530V574H529V570H527V574H524V570H522V574H521V570H518V574H517V570H516V574H515V566H514V570H513V574H512V570H510V574H508V570H507V574H504V570H498V566H497V574H496V570H492V574H489V570H488V574H486V570H485V574H484V570H480V574H478V570H476V574H475V570H473V574H472V570H467V574H465V570H455V574H454V570H453V574H450V570H447V574H445V570H442V574H440V570H436V574H434V570H433V574H432V570H431V574H430V570H428V577H427V570H422V577H421V570H417V574H416V570H414V574H413V570H411V574H410V570H408V574H407V570H405V574H403V570H400V574H399V570H397V574H394V570H393V574H392V570H391V574H390V570H388V574H387V570H385V574H384V570H383V574H377V570H376V574H374V570H373V574H371V570H370V574H367V570H364V574H360V570H359V574H358V570H357V574H356V570H354V574H353V570H351V577H350V570H346V574H342V570H340V574H339V570H335V574H329V570H325V574H324V570H323V566H322V570H321V581H320V570H317V574H316V570H315V574H314V570H313V574H312V570H310V574H309V570H307V574H306V570H303V574H300V570H293V577H292V570H290V574H289V570H288V574H287V570H286V574H285V570H284V574H281V570H277V574H273V570H271V581H270V570H263V574H262V570H259V574H258V570H257V574H255V566H254V570H253V574H250V570H249V580H248V570H246V574H245V570H242V574H241V570H237V574H235V570H234V574H233V570H232V574H231V570H230V574H229V570H222V574H221V570H217V574H216V570H212V574H211V570H208V574H207V570H206V574H202V570H200V574H199V570H197V574H196V570H195V574H189V570H188V574H187V570H183V574H182V570H181V574H178V570H175V577H174V570H173V574H171V570H170V574H169V570H162V574H161V570H156V574H153V570H146V574H145V570H144V574H142V570H141V574H140V570H139V574H138V570H137V574H135V570H134V577H133V566H132V570H129V574H125V570H124V574H123V570H113V574H112V570H109V574H103V570H102V574H96V570H94V577H93V570H86V574H85V566H84V574H83V570H79V574H78V570H76V574H75V570H74V574H72V570H71V581H70V570H69V577H68V570H67V574H66V570H64V574H60V570H59V581H58V570H56V574H55V570H51V581H50V570H49V574H48V570H47V574H46V570H44V574H43V570H42Z" fill="#0000ff" shape-rendering="crispEdges"/><circle cx="1900.5" cy="953.5" r="5" fill="#008080" stroke="#000" stroke-width="1"/></svg><span class="t" style="left:10.40px;top:146px;font-size:12px;color:#0000ff;letter-spacing:-0.139px;">500.0</span><span class="t" style="left:10.30px;top:226px;font-size:12px;color:#0000ff;letter-spacing:-0.089px;">400.0</span><span class="t" style="left:10.30px;top:306px;font-size:12px;color:#0000ff;letter-spacing:-0.089px;">300.0</span><span class="t" style="left:10.30px;top:386px;font-size:12px;color:#0000ff;letter-spacing:-0.089px;">200.0</span><span class="t" style="left:10.30px;top:466px;font-size:12px;color:#0000ff;letter-spacing:-0.089px;">100.0</span><span class="t" style="left:23.30px;top:546px;font-size:12px;color:#0000ff;transform-origin:0 50%;transform:scaleX(0.9701);">0.0</span><span class="t" style="left:5.60px;top:625px;font-size:12px;color:#0000ff;letter-spacing:0.050px;">-100.0</span><span class="t" style="left:5.60px;top:705px;font-size:12px;color:#0000ff;letter-spacing:0.050px;">-200.0</span><span class="t" style="left:5.60px;top:785px;font-size:12px;color:#0000ff;letter-spacing:0.050px;">-300.0</span><span class="t" style="left:5.60px;top:865px;font-size:12px;color:#0000ff;letter-spacing:0.050px;">-400.0</span><span class="t" style="left:5.60px;top:945px;font-size:12px;color:#0000ff;letter-spacing:0.050px;">-500.0</span><span class="t" style="left:21.60px;top:164.5px;font-size:12px;color:#0000ff;transform-origin:0 50%;transform:scaleX(0.9113);">mV</span><span class="t" style="left:33.55px;top:960px;font-size:12px;color:#000;transform-origin:0 50%;transform:scaleX(0.9584);">0.0</span><span class="t" style="left:219.55px;top:960px;font-size:12px;color:#000;transform-origin:0 50%;transform:scaleX(0.9584);">5.0</span><span class="t" style="left:402.20px;top:960px;font-size:12px;color:#000;transform-origin:0 50%;transform:scaleX(0.9712);">10.0</span><span class="t" style="left:588.20px;top:960px;font-size:12px;color:#000;transform-origin:0 50%;transform:scaleX(0.9712);">15.0</span><span class="t" style="left:774.20px;top:960px;font-size:12px;color:#000;transform-origin:0 50%;transform:scaleX(0.9712);">20.0</span><span class="t" style="left:960.20px;top:960px;font-size:12px;color:#000;transform-origin:0 50%;transform:scaleX(0.9712);">25.0</span><span class="t" style="left:1146.20px;top:960px;font-size:12px;color:#000;transform-origin:0 50%;transform:scaleX(0.9712);">30.0</span><span class="t" style="left:1331.20px;top:960px;font-size:12px;color:#000;transform-origin:0 50%;transform:scaleX(0.9712);">35.0</span><span class="t" style="left:1517.20px;top:960px;font-size:12px;color:#000;transform-origin:0 50%;transform:scaleX(0.9712);">40.0</span><span class="t" style="left:1703.20px;top:960px;font-size:12px;color:#000;transform-origin:0 50%;transform:scaleX(0.9712);">45.0</span><span class="t" style="left:1889.20px;top:960px;font-size:12px;color:#000;transform-origin:0 50%;transform:scaleX(0.9712);">50.0</span><div style="left:5px;top:979px;width:35px;height:13px;background:#8080ff"></div><span class="t" style="left:13.80px;top:978px;font-size:10.4px;color:#e0e0ff;transform-origin:0 50%;transform:scaleX(0.8157);">x1.0</span><span class="t" style="left:43.70px;top:978px;font-size:12px;color:#000;transform-origin:0 50%;transform:scaleX(0.8940);">ms</span><svg style="left:0;top:0" width="60" height="1080" viewBox="0 0 60 1080"><rect x="3" y="151" width="9" height="9" fill="#000"/><rect x="4" y="152" width="7" height="7" fill="#0000ff"/><rect x="37.5" y="949.5" width="8" height="8" fill="#fff" stroke="#000" stroke-width="1"/></svg><div style="left:3px;top:997px;width:1914px;height:80px;background:#a0a0a0"></div><span class="t" style="left:23.30px;top:998px;font-size:12px;color:#fff;letter-spacing:-0.089px;">Channel</span><div style="left:91px;top:998px;width:1px;height:14px;background:#f0f0f0"></div><span class="t" style="left:97.00px;top:998px;font-size:12px;color:#fff;letter-spacing:0.055px;">Name</span><div style="left:155px;top:998px;width:1px;height:14px;background:#f0f0f0"></div><span class="t" style="left:161.00px;top:998px;font-size:12px;color:#fff;transform-origin:0 50%;transform:scaleX(0.9460);">Value</span><div style="left:213px;top:998px;width:1px;height:14px;background:#f0f0f0"></div><span class="t" style="left:219.00px;top:998px;font-size:12px;color:#fff;transform-origin:0 50%;transform:scaleX(1.1253);">Min</span><div style="left:264px;top:998px;width:1px;height:14px;background:#f0f0f0"></div><span class="t" style="left:270.00px;top:998px;font-size:12px;color:#fff;letter-spacing:-0.085px;">Max</span><div style="left:316px;top:998px;width:1px;height:14px;background:#f0f0f0"></div><span class="t" style="left:322.00px;top:998px;font-size:12px;color:#fff;transform-origin:0 50%;transform:scaleX(0.9709);">Average</span><div style="left:389px;top:998px;width:1px;height:14px;background:#f0f0f0"></div><span class="t" style="left:395.00px;top:998px;font-size:12px;color:#fff;">σ</span><div style="left:435px;top:998px;width:1px;height:14px;background:#f0f0f0"></div><span class="t" style="left:441.00px;top:998px;font-size:12px;color:#fff;letter-spacing:-0.059px;">Capture Count</span><div style="left:543px;top:998px;width:1px;height:14px;background:#f0f0f0"></div><span class="t" style="left:549.00px;top:998px;font-size:12px;color:#fff;transform-origin:0 50%;transform:scaleX(0.9506);">Span</span><div style="left:18px;top:1013px;width:1898px;height:15px;background:#6593bb"></div><div style="left:91px;top:1013px;width:1px;height:15px;background:#b8c4d0"></div><div style="left:155px;top:1013px;width:1px;height:15px;background:#b8c4d0"></div><div style="left:213px;top:1013px;width:1px;height:15px;background:#b8c4d0"></div><div style="left:264px;top:1013px;width:1px;height:15px;background:#b8c4d0"></div><div style="left:316px;top:1013px;width:1px;height:15px;background:#b8c4d0"></div><div style="left:389px;top:1013px;width:1px;height:15px;background:#b8c4d0"></div><div style="left:435px;top:1013px;width:1px;height:15px;background:#b8c4d0"></div><div style="left:543px;top:1013px;width:1px;height:15px;background:#b8c4d0"></div><div style="left:7px;top:1018px;width:6px;height:6px;background:#0000ff;border:1px solid #000"></div><span class="t" style="left:20.20px;top:1014px;font-size:9.7px;color:#fff;">A</span><span class="t" style="left:94.50px;top:1014px;font-size:9.7px;color:#fff;transform-origin:0 50%;transform:scaleX(0.9594);">Peak To Peak</span><span class="t" style="left:158.50px;top:1014px;font-size:9.7px;color:#fff;transform-origin:0 50%;transform:scaleX(0.9523);">65.39 mV</span><span class="t" style="left:216.50px;top:1014px;font-size:9.7px;color:#fff;transform-origin:0 50%;transform:scaleX(0.9523);">60.72 mV</span><span class="t" style="left:267.50px;top:1014px;font-size:9.7px;color:#fff;transform-origin:0 50%;transform:scaleX(0.9523);">74.73 mV</span><span class="t" style="left:319.50px;top:1014px;font-size:9.7px;color:#fff;transform-origin:0 50%;transform:scaleX(0.9523);">68.43 mV</span><span class="t" style="left:392.50px;top:1014px;font-size:9.7px;color:#fff;transform-origin:0 50%;transform:scaleX(0.9523);">3.135 mV</span><span class="t" style="left:438.50px;top:1014px;font-size:9.7px;color:#fff;transform-origin:0 50%;transform:scaleX(0.8781);">20</span><span class="t" style="left:546.50px;top:1014px;font-size:9.7px;color:#fff;letter-spacing:0.070px;">Whole trace</span><div style="left:18px;top:1029px;width:1898px;height:15px;background:#fff"></div><div style="left:91px;top:1029px;width:1px;height:15px;background:#a0a0a0"></div><div style="left:155px;top:1029px;width:1px;height:15px;background:#a0a0a0"></div><div style="left:213px;top:1029px;width:1px;height:15px;background:#a0a0a0"></div><div style="left:264px;top:1029px;width:1px;height:15px;background:#a0a0a0"></div><div style="left:316px;top:1029px;width:1px;height:15px;background:#a0a0a0"></div><div style="left:389px;top:1029px;width:1px;height:15px;background:#a0a0a0"></div><div style="left:435px;top:1029px;width:1px;height:15px;background:#a0a0a0"></div><div style="left:543px;top:1029px;width:1px;height:15px;background:#a0a0a0"></div><div style="left:7px;top:1034px;width:6px;height:6px;background:#0000ff;border:1px solid #000"></div><span class="t" style="left:20.20px;top:1030px;font-size:9.7px;color:#000;">A</span><span class="t" style="left:94.50px;top:1030px;font-size:9.7px;color:#000;transform-origin:0 50%;transform:scaleX(1.0498);">Maximum</span><span class="t" style="left:158.50px;top:1030px;font-size:9.7px;color:#000;transform-origin:0 50%;transform:scaleX(0.9523);">28.02 mV</span><span class="t" style="left:216.50px;top:1030px;font-size:9.7px;color:#000;transform-origin:0 50%;transform:scaleX(0.9523);">28.02 mV</span><span class="t" style="left:267.50px;top:1030px;font-size:9.7px;color:#000;transform-origin:0 50%;transform:scaleX(0.9559);">32.7 mV</span><span class="t" style="left:319.50px;top:1030px;font-size:9.7px;color:#000;transform-origin:0 50%;transform:scaleX(0.9523);">31.29 mV</span><span class="t" style="left:392.50px;top:1030px;font-size:9.7px;color:#000;transform-origin:0 50%;transform:scaleX(0.9523);">2.198 mV</span><span class="t" style="left:438.50px;top:1030px;font-size:9.7px;color:#000;transform-origin:0 50%;transform:scaleX(0.8781);">20</span><span class="t" style="left:546.50px;top:1030px;font-size:9.7px;color:#000;letter-spacing:0.070px;">Whole trace</span><div style="left:18px;top:1045px;width:1898px;height:15px;background:#fff"></div><div style="left:91px;top:1045px;width:1px;height:15px;background:#a0a0a0"></div><div style="left:155px;top:1045px;width:1px;height:15px;background:#a0a0a0"></div><div style="left:213px;top:1045px;width:1px;height:15px;background:#a0a0a0"></div><div style="left:264px;top:1045px;width:1px;height:15px;background:#a0a0a0"></div><div style="left:316px;top:1045px;width:1px;height:15px;background:#a0a0a0"></div><div style="left:389px;top:1045px;width:1px;height:15px;background:#a0a0a0"></div><div style="left:435px;top:1045px;width:1px;height:15px;background:#a0a0a0"></div><div style="left:543px;top:1045px;width:1px;height:15px;background:#a0a0a0"></div><div style="left:7px;top:1050px;width:6px;height:6px;background:#0000ff;border:1px solid #000"></div><span class="t" style="left:20.20px;top:1046px;font-size:9.7px;color:#000;">A</span><span class="t" style="left:94.50px;top:1046px;font-size:9.7px;color:#000;transform-origin:0 50%;transform:scaleX(1.0709);">Minimum</span><span class="t" style="left:158.50px;top:1046px;font-size:9.7px;color:#000;transform-origin:0 50%;transform:scaleX(0.9618);">-37.37 mV</span><span class="t" style="left:216.50px;top:1046px;font-size:9.7px;color:#000;transform-origin:0 50%;transform:scaleX(0.9618);">-42.03 mV</span><span class="t" style="left:267.50px;top:1046px;font-size:9.7px;color:#000;transform-origin:0 50%;transform:scaleX(0.9663);">-32.7 mV</span><span class="t" style="left:319.50px;top:1046px;font-size:9.7px;color:#000;transform-origin:0 50%;transform:scaleX(0.9618);">-37.14 mV</span><span class="t" style="left:392.50px;top:1046px;font-size:9.7px;color:#000;transform-origin:0 50%;transform:scaleX(0.9559);">1.84 mV</span><span class="t" style="left:438.50px;top:1046px;font-size:9.7px;color:#000;transform-origin:0 50%;transform:scaleX(0.8781);">20</span><span class="t" style="left:546.50px;top:1046px;font-size:9.7px;color:#000;letter-spacing:0.070px;">Whole trace</span><div style="left:18px;top:1061px;width:1898px;height:16px;background:#fff"></div><div style="left:91px;top:1061px;width:1px;height:16px;background:#a0a0a0"></div><div style="left:155px;top:1061px;width:1px;height:16px;background:#a0a0a0"></div><div style="left:213px;top:1061px;width:1px;height:16px;background:#a0a0a0"></div><div style="left:264px;top:1061px;width:1px;height:16px;background:#a0a0a0"></div><div style="left:316px;top:1061px;width:1px;height:16px;background:#a0a0a0"></div><div style="left:389px;top:1061px;width:1px;height:16px;background:#a0a0a0"></div><div style="left:435px;top:1061px;width:1px;height:16px;background:#a0a0a0"></div><div style="left:543px;top:1061px;width:1px;height:16px;background:#a0a0a0"></div><div style="left:7px;top:1066px;width:6px;height:6px;background:#0000ff;border:1px solid #000"></div><span class="t" style="left:20.20px;top:1062px;font-size:9.7px;color:#000;">A</span><span class="t" style="left:94.50px;top:1062px;font-size:9.7px;color:#000;transform-origin:0 50%;transform:scaleX(0.9674);">DC Average</span><span class="t" style="left:158.50px;top:1062px;font-size:9.7px;color:#000;transform-origin:0 50%;transform:scaleX(0.9618);">-2.065 mV</span><span class="t" style="left:216.50px;top:1062px;font-size:9.7px;color:#000;transform-origin:0 50%;transform:scaleX(0.9618);">-2.452 mV</span><span class="t" style="left:267.50px;top:1062px;font-size:9.7px;color:#000;transform-origin:0 50%;transform:scaleX(0.9618);">-1.856 mV</span><span class="t" style="left:319.50px;top:1062px;font-size:9.7px;color:#000;transform-origin:0 50%;transform:scaleX(0.9618);">-2.071 mV</span><span class="t" style="left:392.50px;top:1062px;font-size:9.7px;color:#000;transform-origin:0 50%;transform:scaleX(0.9363);">147.8 µV</span><span class="t" style="left:438.50px;top:1062px;font-size:9.7px;color:#000;transform-origin:0 50%;transform:scaleX(0.8781);">20</span><span class="t" style="left:546.50px;top:1062px;font-size:9.7px;color:#000;letter-spacing:0.070px;">Whole trace</span><div style="left:1899px;top:1007px;width:17px;height:7px;background:#a8a8a8"></div><div style="left:1902px;top:1009px;width:7px;height:3px;background:#fff"></div>
</body></html>
